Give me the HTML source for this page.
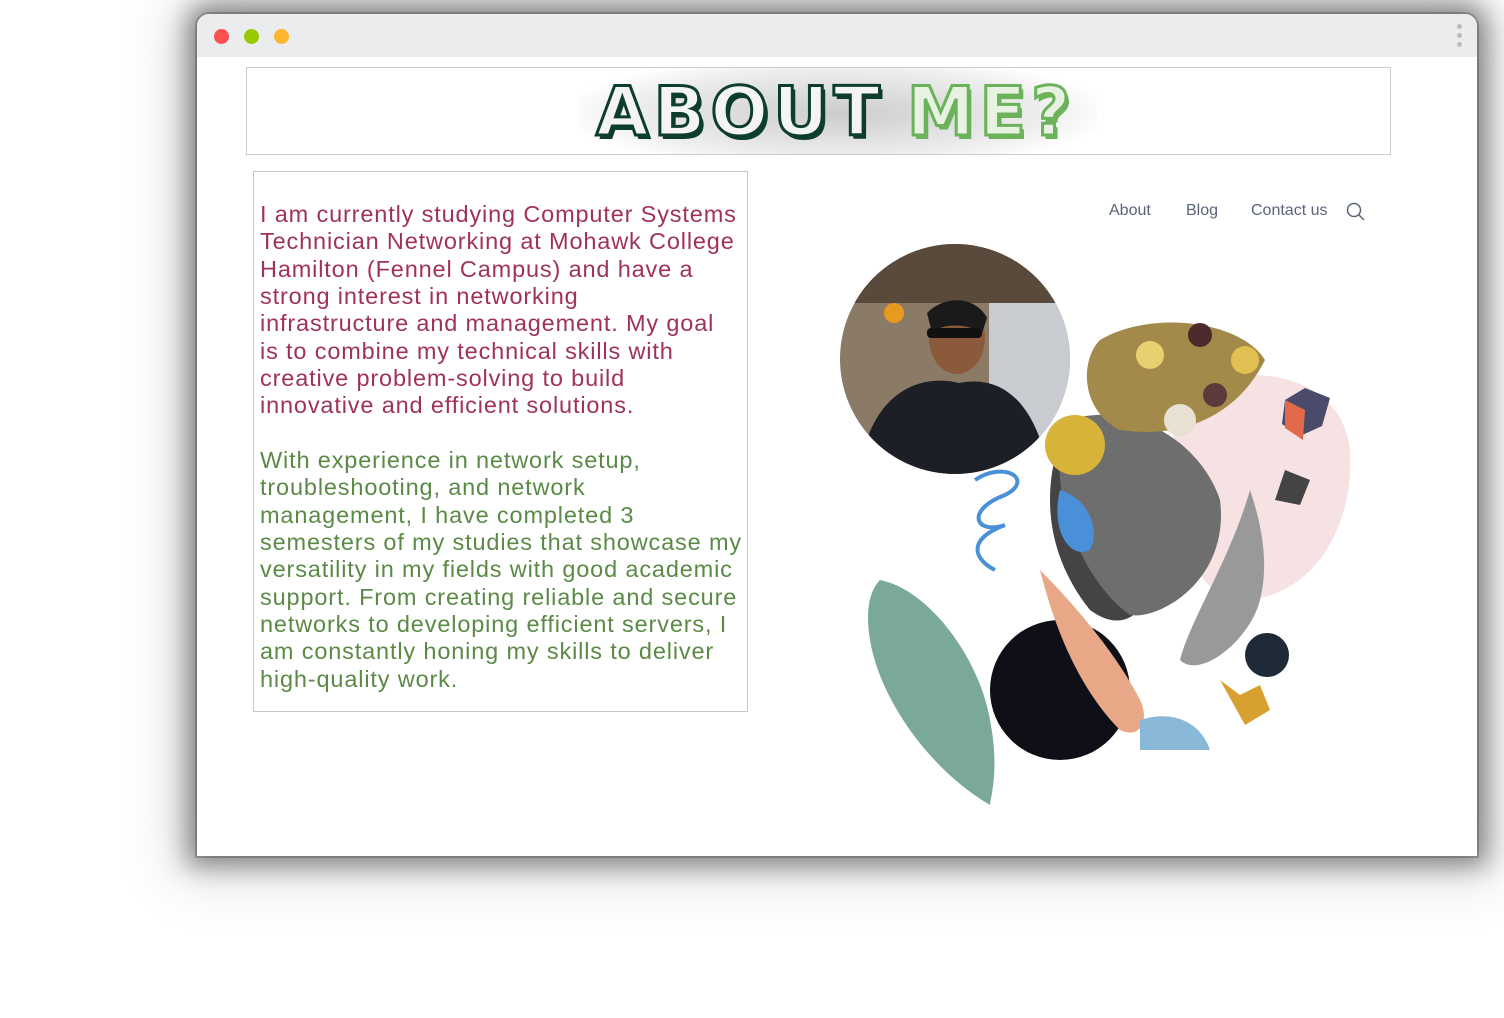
<!DOCTYPE html>
<html><head><meta charset="utf-8"><style>
*{margin:0;padding:0;box-sizing:border-box}
body{width:1504px;height:1018px;background:#fff;position:relative;overflow:hidden;font-family:"Liberation Sans",sans-serif}
.win{position:absolute;left:197px;top:14px;width:1280px;height:842px;background:#fff;border-radius:12px 12px 0 0;box-shadow:0 0 0 2px rgba(0,0,0,.2),0 0 25px 10px rgba(0,0,0,.42),0 0 60px 20px rgba(0,0,0,.15);overflow:hidden}
.bar{height:43px;background:#eaecee;position:relative}
.dot{position:absolute;top:15px;width:15px;height:15px;border-radius:50%}
.kebab{position:absolute;right:15px;top:10px;width:5px}
.kebab i{display:block;width:5px;height:5px;border-radius:50%;background:#bbb;margin-bottom:4px}
.hdr{position:absolute;left:49px;top:53px;width:1145px;height:88px;border:1px solid #ccc;background:#fff;overflow:hidden}
.glow{position:absolute;left:330px;top:-10px;width:520px;height:110px;background:radial-gradient(ellipse at center,rgba(0,0,0,.2),rgba(0,0,0,.07) 55%,rgba(0,0,0,0) 75%)}
.title{position:absolute;left:349px;top:2px;font-size:68px;font-weight:bold;letter-spacing:5px;white-space:nowrap;line-height:86px;font-family:"DejaVu Sans","Liberation Sans",sans-serif}
.a{color:#f4f4f4;-webkit-text-stroke:3px #0d3d2b;text-shadow:3px 4px 0 #0d3d2b}
.m{color:#e8f2e2;-webkit-text-stroke:3px #6ab35a;text-shadow:3px 4px 0 #6ab35a;margin-left:22px}
.box{position:absolute;left:56px;top:157px;width:495px;height:541px;border:1px solid #c8c8c8}
.p{position:absolute;left:6px;font-size:23.5px;line-height:27.35px;letter-spacing:.85px;white-space:nowrap}
.r{top:29px;color:#a0325a}
.g{top:275px;color:#5a8a45}
.nav{position:absolute;top:188px;font-size:16px;color:#5a6478}
</style></head><body>
<div class="win">
 <div class="bar">
  <div class="dot" style="left:17px;background:#fe4f4f"></div>
  <div class="dot" style="left:47px;background:#97c800"></div>
  <div class="dot" style="left:77px;background:#feb52f"></div>
  <div class="kebab"><i></i><i></i><i></i></div>
 </div>
 <div class="hdr"><div class="glow"></div><div class="title"><span class="a">ABOUT</span><span class="m">ME?</span></div></div>
 <div class="box">
  <div class="p r">I am currently studying Computer Systems<br>Technician Networking at Mohawk College<br>Hamilton (Fennel Campus) and have a<br>strong interest in networking<br>infrastructure and management. My goal<br>is to combine my technical skills with<br>creative problem-solving to build<br>innovative and efficient solutions.</div>
  <div class="p g">With experience in network setup,<br>troubleshooting, and network<br>management, I have completed 3<br>semesters of my studies that showcase my<br>versatility in my fields with good academic<br>support. From creating reliable and secure<br>networks to developing efficient servers, I<br>am constantly honing my skills to deliver<br>high-quality work.</div>
 </div>
 <div class="nav" style="left:912px">About</div>
 <div class="nav" style="left:989px">Blog</div>
 <div class="nav" style="left:1054px">Contact us</div>
 <svg style="position:absolute;left:1149px;top:188px" width="20" height="20" viewBox="0 0 20 20"><circle cx="8" cy="8" r="6.5" fill="none" stroke="#5a6478" stroke-width="1.5"/><path d="M13 13l5 5" stroke="#5a6478" stroke-width="1.5"/></svg>
 <svg style="position:absolute;left:443px;top:211px" width="730" height="600" viewBox="640 225 730 600">
  <path d="M1150 390 C1250 360 1340 370 1350 450 C1355 530 1310 600 1240 600 C1190 595 1170 520 1190 470 Z" fill="#f6e2e2"/>
  <path d="M1060 440 C1040 500 1050 560 1090 610 C1130 640 1160 600 1140 560 C1130 520 1100 470 1060 440Z" fill="#444"/>
  <path d="M1070 420 C1130 400 1200 440 1220 500 C1230 580 1160 620 1130 615 C1080 580 1040 480 1070 420Z" fill="#6e6e6e"/>
  <circle cx="1075" cy="445" r="30" fill="#d8b33a"/>
  <path d="M1100 340 C1150 310 1240 320 1265 360 C1240 410 1190 440 1120 430 C1080 410 1080 360 1100 340Z" fill="#a48a4a"/>
  <circle cx="1150" cy="355" r="14" fill="#e8d070"/><circle cx="1200" cy="335" r="12" fill="#4a2a2a"/><circle cx="1245" cy="360" r="14" fill="#e0c050"/><circle cx="1180" cy="420" r="16" fill="#e8e0d0"/><circle cx="1215" cy="395" r="12" fill="#5a3a3a"/>
  <path d="M1285 400 l20 -12 l25 10 l-8 28 l-22 10 l-18 -12z" fill="#4a4a6a"/><path d="M1285 400 l20 10 l-2 30 l-18 -12z" fill="#e26a4a"/>
  <path d="M1250 490 C1230 560 1190 620 1180 660 C1200 680 1250 640 1260 600 C1270 560 1260 520 1250 490Z" fill="#999"/>
  <path d="M1285 470 l25 10 l-10 25 l-25 -5z" fill="#444"/>
  <circle cx="1267" cy="655" r="22" fill="#1e2a38"/>
  <circle cx="1060" cy="690" r="70" fill="#0f0f18"/>
  <path d="M880 580 C930 590 980 660 990 720 C1000 770 990 800 990 805 C930 770 880 700 870 640 C865 610 870 590 880 580Z" fill="#7aa89a"/>
  <path d="M1040 570 C1080 610 1120 660 1140 700 C1150 720 1140 740 1120 730 C1090 700 1060 650 1040 570Z" fill="#e8a888"/>
  <path d="M975 480 c30 -20 60 0 30 15 c-40 15 -30 40 0 30 c-40 15 -30 35 -10 45" fill="none" stroke="#4a90d8" stroke-width="4"/>
  <path d="M1140 720 c30 -10 60 0 70 30 l-70 0z" fill="#8ab8d8"/>
  <path d="M1220 680 l20 15 l20 -10 l10 25 l-25 15z" fill="#d8a030"/>
  <path d="M1060 490 c30 10 40 40 30 60 c-20 10 -40 -20 -30 -60z" fill="#4a90d8"/>
 </svg>
 <svg style="position:absolute;left:642px;top:229px" width="232" height="232"><defs><clipPath id="c"><circle cx="116" cy="116" r="115"/></clipPath></defs><g clip-path="url(#c)"><rect width="232" height="232" fill="#8a7a66"/><rect x="150" width="82" height="232" fill="#c8ccd0"/><rect x="0" y="0" width="232" height="60" fill="#5a4a3c"/><path d="M20 232 C30 150 80 130 120 140 C170 130 200 170 210 232Z" fill="#1c2026"/><ellipse cx="118" cy="95" rx="28" ry="36" fill="#8a5a3a"/><path d="M88 70 c20 -20 50 -15 60 5 l-5 15 c-15 -10 -40 -10 -50 0z" fill="#1a1a1a"/><rect x="88" y="85" width="55" height="10" rx="4" fill="#111"/><circle cx="55" cy="70" r="10" fill="#e89a20"/></g></svg>
</div>
</body></html>
